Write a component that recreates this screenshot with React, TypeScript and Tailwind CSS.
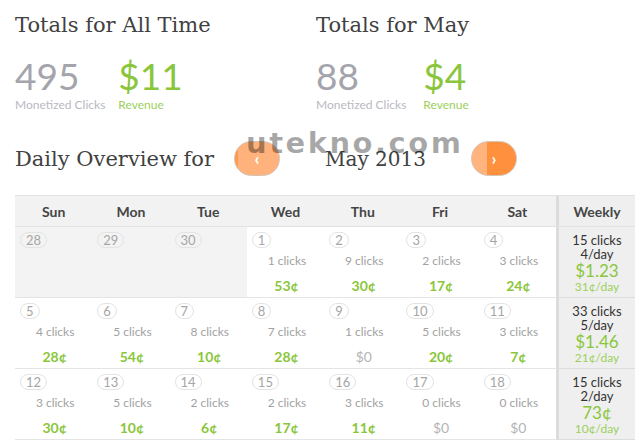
// @ts-nocheck
import React from "react";

type Day = { d: number; out?: boolean; c?: number; r?: string };
type Week = { days: Day[]; clicks: number; per: string; rev: string; perRev: string };

const WEEKS: Week[] = [
  {
    days: [
      { d: 28, out: true },
      { d: 29, out: true },
      { d: 30, out: true },
      { d: 1, c: 1, r: "53¢" },
      { d: 2, c: 9, r: "30¢" },
      { d: 3, c: 2, r: "17¢" },
      { d: 4, c: 3, r: "24¢" },
    ],
    clicks: 15,
    per: "4/day",
    rev: "$1.23",
    perRev: "31¢/day",
  },
  {
    days: [
      { d: 5, c: 4, r: "28¢" },
      { d: 6, c: 5, r: "54¢" },
      { d: 7, c: 8, r: "10¢" },
      { d: 8, c: 7, r: "28¢" },
      { d: 9, c: 1, r: "$0" },
      { d: 10, c: 5, r: "20¢" },
      { d: 11, c: 3, r: "7¢" },
    ],
    clicks: 33,
    per: "5/day",
    rev: "$1.46",
    perRev: "21¢/day",
  },
  {
    days: [
      { d: 12, c: 3, r: "30¢" },
      { d: 13, c: 5, r: "10¢" },
      { d: 14, c: 2, r: "6¢" },
      { d: 15, c: 2, r: "17¢" },
      { d: 16, c: 3, r: "11¢" },
      { d: 17, c: 0, r: "$0" },
      { d: 18, c: 0, r: "$0" },
    ],
    clicks: 15,
    per: "2/day",
    rev: "73¢",
    perRev: "10¢/day",
  },
];

const DAYS = ["Sun", "Mon", "Tue", "Wed", "Thu", "Fri", "Sat"];

function Stat({ value, label, green, gap }: { value: string; label: string; green?: boolean; gap?: string }) {
  return (
    <div className={`flex flex-col ${gap || ""}`}>
      <span className={`text-[37px] leading-[38px] ${green ? "text-[#8ac63c]" : "text-[#a4a4ac]"}`}>{value}</span>
      <span className={`mt-[3px] text-[12px] leading-[14px] ${green ? "text-[#9ccf5c]" : "text-[#b9b9c1]"}`}>{label}</span>
    </div>
  );
}

function Totals({ title, clicks, revenue, gap }: { title: string; clicks: string; revenue: string; gap: string }) {
  return (
    <div className="w-[301px]">
      <h2 className="font-['DejaVu_Serif',serif] text-[21px] leading-[26px] text-[#414141]">{title}</h2>
      <div className="flex mt-[19px]">
        <Stat value={clicks} label="Monetized Clicks" gap={gap} />
        <Stat value={revenue} label="Revenue" green />
      </div>
    </div>
  );
}

function DayCell({ day }: { day: Day }) {
  const zero = day.r === "$0";
  return (
    <div className={`h-[71px] border-b border-[#e4e4e4] flex flex-col ${day.out ? "bg-[#f3f3f3]" : "bg-white"}`}>
      <span className="self-start mt-[5px] ml-[5px] h-[16px] min-w-[17px] px-[5px] rounded-full border border-[#e3e3e3] text-[13px] leading-[14px] text-[#a6a6a6] text-center">
        {day.d}
      </span>
      {!day.out && (
        <>
          <span className="mt-[6px] text-center pl-[3px] text-[12px] leading-[14px] text-[#a2a2a2]">{day.c} clicks</span>
          <span className={`mt-[10px] text-center pl-[2px] text-[14px] leading-[16px] ${zero ? "text-[#b4b4b4]" : "text-[#8ac63c] font-bold"}`}>
            {day.r}
          </span>
        </>
      )}
    </div>
  );
}

export default function App() {
  return (
    <div className="relative w-[641px] h-[443px] overflow-hidden bg-white font-['Lato',sans-serif]">
      <div className="flex pl-[15px] pt-[12px]">
        <Totals title="Totals for All Time" clicks="495" revenue="$11" gap="mr-[13px]" />
        <Totals title="Totals for May" clicks="88" revenue="$4" gap="mr-[17px]" />
      </div>

      {/* month switcher */}
      <div className="flex items-center pl-[15px] mt-[29px] h-[35px]">
        <span className="font-['DejaVu_Serif',serif] text-[21px] leading-[26px] text-[#414141] w-[219px]">Daily Overview for</span>
        <button className="w-[46px] h-[35px] rounded-full border border-[#d5c3b5] bg-[linear-gradient(90deg,#ff9a4c_6%,#ffb27b_6%)] text-white font-bold text-[17px] leading-none">
          ‹
        </button>
        <span className="w-[191px] text-center font-['DejaVu_Serif',serif] text-[20px] leading-[26px] text-[#414141]">May 2013</span>
        <button className="w-[46px] h-[35px] rounded-full border border-[#d5c3b5] bg-[linear-gradient(90deg,#ffb47d_33%,#ff913e_33%)] text-white font-bold text-[17px] leading-none">
          ›
        </button>
      </div>

      {/* calendar */}
      <div className="ml-[15px] mt-[19px] w-[620px]">
        <div className="grid grid-cols-[repeat(7,minmax(0,1fr))_79px] h-[32px] bg-[#f2f2f2] border-t border-b border-[#e2e2e2] text-[14px] font-bold text-[#454545]">
          {DAYS.map((d) => (
            <div key={d} className="flex items-center justify-center">
              {d}
            </div>
          ))}
          <div className="flex items-center justify-center border-l-[3px] border-[#dcdcdc] bg-[#efefef]">Weekly</div>
        </div>
        {WEEKS.map((w, i) => (
          <div key={i} className="grid grid-cols-[repeat(7,minmax(0,1fr))_79px]">
            {w.days.map((d) => (
              <DayCell key={d.d} day={d} />
            ))}
            <div className="h-[71px] border-b border-l-[3px] border-[#dcdcdc] bg-[#efefef] flex flex-col items-center pt-[6px]">
              <span className="text-[13px] leading-[14px] text-[#333]">{w.clicks} clicks</span>
              <span className="text-[13px] leading-[14px] text-[#333]">{w.per}</span>
              <span className="mt-[1px] text-[17px] leading-[18px] text-[#8ac63c]">{w.rev}</span>
              <span className="text-[12px] leading-[14px] text-[#9ccf5c]">{w.perRev}</span>
            </div>
          </div>
        ))}
      </div>

      {/* watermark */}
      <span className="absolute left-[246px] top-[127px] font-['DejaVu_Sans',sans-serif] font-bold text-[29px] leading-[32px] tracking-[2.5px] text-[rgba(0,0,0,0.34)] pointer-events-none">
        utekno.com
      </span>
    </div>
  );
}
